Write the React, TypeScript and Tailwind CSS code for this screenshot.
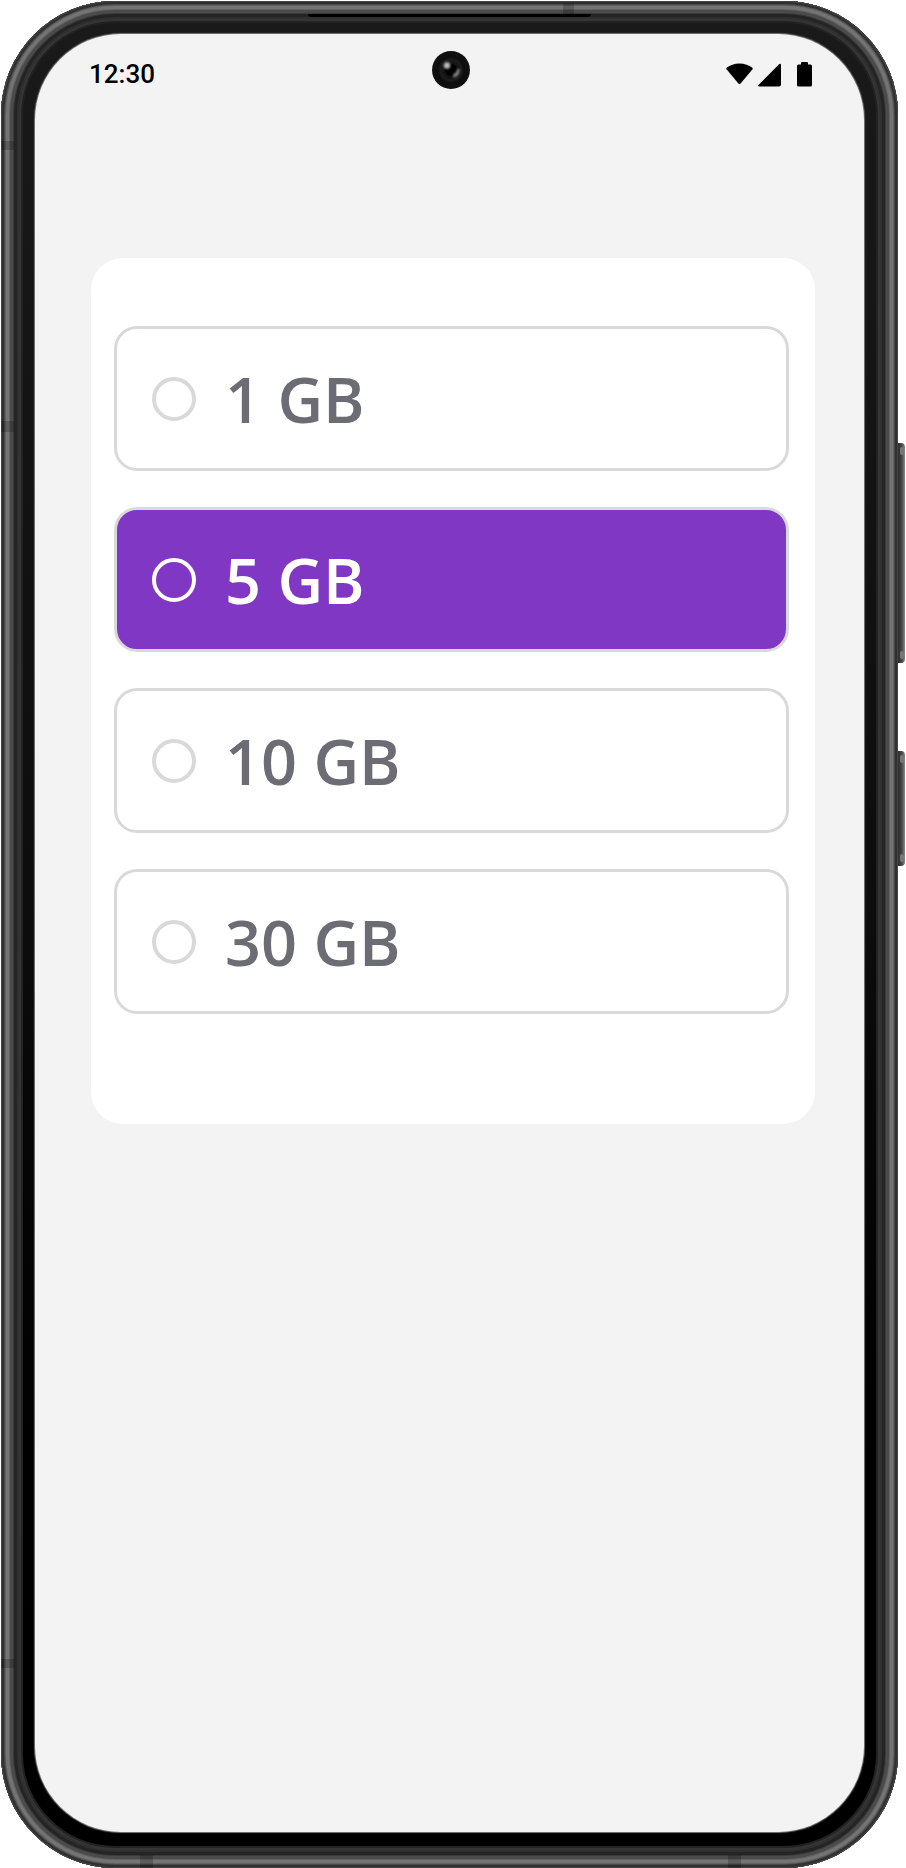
import { useState } from "react";

const PLANS = ["1 GB", "5 GB", "10 GB", "30 GB"];

function StatusBar() {
  return (
    <header className="grid grid-cols-3 items-start pt-[17px] pr-[52px] pl-[54px]">
      <time className="pt-1 text-[26px] leading-[38px] font-medium text-black font-['Roboto',sans-serif]">
        12:30
      </time>
      <svg className="w-[38px] h-[38px] justify-self-center" viewBox="0 0 38 38" aria-hidden="true">
        <defs>
          <radialGradient id="lens">
            <stop offset="0" stopColor="#000" />
            <stop offset="0.55" stopColor="#1c1c1c" />
            <stop offset="0.7" stopColor="#0c0c0c" />
            <stop offset="1" stopColor="#121212" />
          </radialGradient>
          <filter id="soften" x="-50%" y="-50%" width="200%" height="200%">
            <feGaussianBlur stdDeviation="0.8" />
          </filter>
        </defs>
        <circle cx="19" cy="19" r="19" fill="url(#lens)" />
        <circle cx="19" cy="19" r="6" fill="#000" />
        <circle cx="15" cy="14.5" r="3.2" fill="#bbb" filter="url(#soften)" />
        <path d="M27.500 18c.5 5-2 7.500-6 8.500l-.5-3c3-1 4-3 4-5.500z" fill="#8a8a8a" filter="url(#soften)" />
      </svg>
      <div className="flex items-center justify-end pt-[11px]">
        <svg className="w-[27px] h-[26px]" viewBox="0 0 27 26" aria-label="Wi-Fi">
          <path d="M13.5 1.5C8.500 1.500 4 3.200 .6 5.800Q0 6.400 .5 7.200L12.600 21.700q.9.900 1.800 0L26.500 7.200q.5-.8-.1-1.400C23 3.200 18.500 1.500 13.500 1.500z" />
        </svg>
        <svg className="ml-[5px] w-[23px] h-[26px]" viewBox="0 0 23 26" aria-label="Signal">
          <path d="M20.800 2.500Q23 .8 23 3v19.500q0 2-2 2H1.500q-2.200 0-.8-1.700z" />
        </svg>
        <svg className="ml-4 w-[15px] h-[26px]" viewBox="0 0 15 26" aria-label="Battery">
          <path d="M4 2.500V1q0-1 1-1h5q1 0 1 1v1.500h2.500Q15 2.500 15 4v19q0 1.500-1.500 1.500h-12Q0 24.500 0 23V4q0-1.500 1.500-1.500z" />
        </svg>
      </div>
    </header>
  );
}

interface PlanOptionProps {
  label: string;
  selected: boolean;
  onSelect: () => void;
}

function PlanOption({ label, selected, onSelect }: PlanOptionProps) {
  return (
    <label
      className={
        "flex h-[145px] cursor-pointer items-center gap-[29px] rounded-[23px] border-3 border-[#d9d9d9] pl-[35px] " +
        (selected ? "bg-[#8038c4] text-white" : "bg-white text-[#6c6c75]")
      }
    >
      <input
        type="radio"
        name="plan"
        checked={selected}
        onChange={onSelect}
        className={
          "size-11 shrink-0 appearance-none rounded-full border-4 " +
          (selected ? "border-white" : "border-[#d9d9d9]")
        }
      />
      <span className="text-[63px] leading-[88px] font-semibold">{label}</span>
    </label>
  );
}

function SideButton({ tall }: { tall?: boolean }) {
  return (
    <div
      className={
        "w-[7px] rounded-r-[4px] bg-linear-to-r from-[#2e2e2e] via-[#444] to-[#8a8a8a] py-1 flex flex-col justify-between items-center " +
        (tall ? "h-[220px]" : "h-[115px]")
      }
    >
      <span className="h-2 w-1 rounded-full bg-[#777]" />
      <span className="h-2 w-1 rounded-full bg-[#777]" />
    </div>
  );
}

export default function App() {
  const [plan, setPlan] = useState("5 GB");

  return (
    <div className="flex min-h-screen bg-white pl-px pt-px font-['Open_Sans','Noto_Sans',sans-serif]">
      <div className="relative flex flex-1 flex-col rounded-[114px] bg-linear-to-b from-[#1a1a1a] via-[#0c0c0c] to-black px-[34px] pt-[33px] pb-9 shadow-[inset_0_0_0_1px_#454545,inset_0_0_0_3px_#303030,inset_0_0_0_4px_#4a4a4a,inset_0_0_0_5px_#626262,inset_0_0_0_8px_#747474,inset_0_0_0_9px_#626262,inset_0_0_0_12px_#4b4b4b,inset_0_0_0_13px_#3a3a3a,inset_0_0_0_16px_#242424,inset_0_0_0_18px_#303030,inset_0_0_0_20px_#353535,inset_0_0_0_22px_#222]">
        <span className="absolute left-[307px] right-[307px] top-[13px] h-[3px] rounded-b-full bg-black" />
        <span className="absolute left-[562px] top-[2px] h-[11px] w-[11px] bg-black/20" />
        <span className="absolute left-0 top-[140px] h-[9px] w-[13px] bg-black/20" />
        <span className="absolute left-0 top-[420px] h-[11px] w-[13px] bg-black/20" />
        <span className="absolute bottom-[200px] left-0 h-[9px] w-[13px] bg-black/20" />
        <span className="absolute bottom-0 left-[139px] h-[13px] w-[13px] bg-black/20" />
        <span className="absolute bottom-0 right-[157px] h-[13px] w-[13px] bg-black/20" />
        <main className="flex flex-1 flex-col rounded-[86px] bg-[#f3f3f3] shadow-[0_0_1px_1px_#777]">
          <StatusBar />
          <fieldset
            aria-label="Data plan"
            className="mt-[165px] mr-[49px] ml-[56px] flex flex-col gap-9 rounded-[32px] bg-white pt-[68px] pr-[26px] pb-[110px] pl-[23px]"
          >
            {PLANS.map((label) => (
              <PlanOption
                key={label}
                label={label}
                selected={plan === label}
                onSelect={() => setPlan(label)}
              />
            ))}
          </fieldset>
        </main>
      </div>
      <div className="flex w-2 flex-col gap-[88px] pt-[442px]">
        <SideButton tall />
        <SideButton />
      </div>
    </div>
  );
}
